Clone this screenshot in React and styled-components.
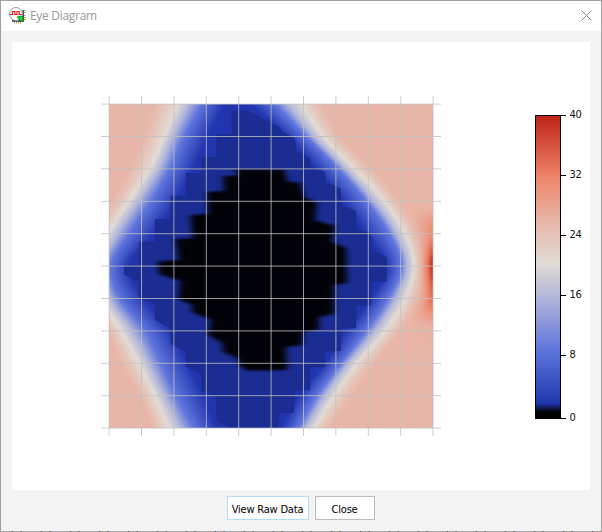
import React from 'react'
import styled, {createGlobalStyle} from 'styled-components'

const GlobalStyle = createGlobalStyle`
  html, body {
    margin: 0;
    padding: 0;
    overflow: hidden;
  }
  * {
    box-sizing: border-box;
  }
`

const LEFT = 97
const TOP = 62
const SIZE = 324
const STEP = SIZE / 10

// one entry per grid line: x of pink, cream, periwinkle, royal on the left,
// then royal, periwinkle, cream, pink on the right, then the right edge value
const ROWS = [
  [44, 69, 93, 116, 141, 166, 193, 213, 26],
  [34, 55, 75, 99, 178, 197, 214, 231, 26],
  [20, 41, 61, 84, 207, 229, 245, 264, 26],
  [3, 20, 42, 67, 234, 257, 275, 291, 26],
  [-15, -1, 20, 45, 257, 280, 296, 308, 31.5],
  [-28, -13, 2, 20, 277, 292, 305, 312, 40],
  [-22, -7, 11, 35, 262, 279, 296, 309, 34],
  [-2, 12, 36, 61, 237, 257, 276, 292, 26.5],
  [12, 30, 52, 79, 216, 232, 248, 266, 26],
  [29, 46, 67, 95, 190, 208, 225, 243, 26],
  [44, 60, 85, 108, 172, 189, 205, 220, 26]
]

const SCALE = [
  [0, [0, 0, 0]],
  [0.9, [2, 3, 8]],
  [2, [33, 54, 174]],
  [9, [95, 117, 221]],
  [16, [178, 182, 218]],
  [20.6, [226, 219, 213]],
  [26, [232, 182, 168]],
  [32, [238, 131, 104]],
  [40, [189, 34, 22]]
]

const colorAt = value => {
  let i = 1
  while (i < SCALE.length - 1 && value > SCALE[i][0]) i++
  const [v0, c0] = SCALE[i - 1]
  const [v1, c1] = SCALE[i]
  const t = Math.max(0, Math.min(1, (value - v0) / (v1 - v0)))
  return `rgb(${c0.map((c, k) => Math.round(c + (c1[k] - c) * t)).join(',')})`
}

const rowAt = y => {
  const i = Math.min(9, Math.floor(y / STEP))
  const t = y / STEP - i
  return ROWS[i].map((v, k) => {
    const b = ROWS[i + 1][k]
    if (k === 8) return v + (b - v) * t * t * (3 - 2 * t)
    // cubic between grid lines so the edge bends gently
    const a = i > 0 ? ROWS[i - 1][k] : 2 * v - b
    const c = i < 9 ? ROWS[i + 2][k] : 2 * b - v
    return 0.5 * (2 * v + (b - a) * t + (2 * a - 5 * v + 4 * b - c) * t * t + (3 * v - a - 3 * b + c) * t * t * t)
  })
}

const stopsAt = y => {
  const [p, c, b, r, r2, b2, c2, p2, edge] = rowAt(y)
  return [
    [p, 26], [(p + c) / 2, 23.6], [c, 20.6], [b + (c - b) * 0.55, 16], [b, 9], [r, 2],
    [r2, 2], [b2, 9], [b2 + (c2 - b2) * 0.45, 16], [c2, 20.6],
    [(p2 + c2) / 2, 23.6], [p2, 26],
    [p2 + (SIZE - p2) * 0.55, 26 + (edge - 26) * 0.5], [SIZE, edge]
  ]
}

const NAVY = `231.7,110.7 231.7,134.3 216.7,134.3 215.7,157 201.7,157 201,173 186,173 185,195.7
  170.7,195.7 170,219 155,219 154.3,241.7 139.3,241.7 138.7,265.7 124,265.7 124,274.3
  138.7,281.7 138.7,298.3 154.3,304.3 155,320 170,327.7 170.7,344.3 185,350.7 185.7,366.7
  201,374 201.7,391 215.7,396.7 216.7,421 230,428 278.7,428 279.3,413.3 294,412.7
  295.3,390.7 310,390 310.3,367.7 325,367 325.3,351.7 340.7,351 341.3,328.3 356,328.3
  356.7,305.7 371.3,305 372,282.3 386.7,281.7 386.7,257.3 372,250 371.3,234.3 356.7,228.3
  356,211 341.3,205 340.7,188.3 326,182.3 325,171.7 310.7,166.7 310,158.3 296.7,151.7
  295,138.3 280.7,131 280,127.3 271.7,123.3 248.3,110.7`

const BLACK = `234,169.5 239,175.5 223,176 224,191 207,192 208,214 190,215 193,238 175,239
  179,260 158,261.5 159,274 180,281 178,299 192,305 192,312 211,320 208,335 222,343
  223,352 238,358 239,365 246,370.5 271,370.5 287,370 286,347 302,345 303,331.5
  319,330 319,317 334,314 334,285 347,283 346,248 332,242 335,226 315,220 317,203
  304,197 300,182.5 288,182 284,169.5`

const TICKS = [[40, 115], [32, 175], [24, 235], [16, 295], [8, 355], [0, 418]]

function Heatmap() {
  const strips = Array.from({length: SIZE / 2}, (_, i) => i * 2)
  const lines = Array.from({length: 11}, (_, i) => i * STEP)
  return (
    <g transform={`translate(${LEFT} ${TOP})`}>
      <defs>
        {strips.map(y => (
          <linearGradient key={y} id={`row${y}`} gradientUnits='userSpaceOnUse' x1={-50} x2={SIZE} y1='0' y2='0'>
            {stopsAt(y + 1).map(([x, v], k) => (
              <stop key={k} offset={(x + 50) / (SIZE + 50)} stopColor={colorAt(v)}/>
            ))}
          </linearGradient>
        ))}
        <clipPath id='plot'>
          <rect width={SIZE} height={SIZE}/>
        </clipPath>
        <filter id='soften' x='-10%' y='-10%' width='120%' height='120%' colorInterpolationFilters='sRGB'>
          <feGaussianBlur stdDeviation='3.4 1.1'/>
        </filter>
      </defs>
      {strips.map(y => (
        <rect key={y} y={y} width={SIZE} height='2' fill={`url(#row${y})`} shapeRendering='crispEdges'/>
      ))}
      <g clipPath='url(#plot)'>
        <g transform='translate(-109 -104)'>
          <polygon points={NAVY} fill='#1b2d92'/>
          <polygon points={BLACK} fill='#020308' filter='url(#soften)'/>
        </g>
      </g>
      <g stroke='#c0c0c0' strokeOpacity='0.8'>
        {lines.map(p => (
          <React.Fragment key={p}>
            <path d={`M${p + 0.1} -8V${SIZE + 8}`}/>
            <path d={`M-8 ${p + 0.1}H${SIZE + 8}`}/>
          </React.Fragment>
        ))}
      </g>
    </g>
  )
}

function ColorBar() {
  return (
    <g>
      <defs>
        <linearGradient id='scale' x1='0' x2='0' y1='1' y2='0'>
          {SCALE.map(([v]) => <stop key={v} offset={v / 40} stopColor={colorAt(v)}/>)}
        </linearGradient>
      </defs>
      <rect x='523.5' y='73.5' width='25' height='303' fill='url(#scale)' stroke='#000'/>
      {TICKS.map(([label, y]) => (
        <React.Fragment key={label}>
          <path d={`M549 ${y - 41.5}h5`} stroke='#000'/>
          <TickLabel x='557.5' y={y - 39}>{label}</TickLabel>
        </React.Fragment>
      ))}
    </g>
  )
}

function AppIcon() {
  return (
    <Icon width='17' height='17' viewBox='0 0 17 17'>
      <path d='M14 3.5h2.5M14 5.5h2.5M14 8.5h2.5M14 10.5h2.5M14 12.5h2.5M5.5 14v2.5M7.5 14v2.5M9.5 14v2.5M11.5 14v2.5' stroke='#b98a3c' strokeWidth='0.9'/>
      <path d='M3 13.8h11V3.5' fill='none' stroke='#2b4762' strokeWidth='1.8'/>
      <circle cx='7' cy='7' r='6.5' fill='#fff' stroke='#999'/>
      <path d='M.8 7.5H3.5v-3h2.3v3h2.2v-3h2.2v3h3' fill='none' stroke='#f01818' strokeWidth='1.2'/>
      <path d='M8.7 9.3h5.3v5.2h-1.8l-1-1.2-2.5-2.3z' fill='#18d828' stroke='#0b6b14' strokeWidth='0.7'/>
    </Icon>
  )
}

export default function App() {
  return (
    <Dialog>
      <GlobalStyle/>
      <TitleBar>
        <AppIcon/>
        <Title>Eye Diagram</Title>
        <CloseIcon width='11' height='11' viewBox='0 0 11 11'>
          <path d='M.5 .5l10 10M10.5 .5l-10 10' stroke='#888' strokeWidth='1'/>
        </CloseIcon>
      </TitleBar>
      <Panel>
        <svg width='578' height='448' viewBox='0 0 578 448'>
          <Heatmap/>
          <ColorBar/>
        </svg>
      </Panel>
      <ButtonRow>
        <Button $width={82} $active>View Raw Data</Button>
        <Button $width={60}>Close</Button>
      </ButtonRow>
      <BottomEdge/>
    </Dialog>
  )
}

const Dialog = styled.div`
  display: flex;
  flex-direction: column;
  width: 602px;
  height: 532px;
  border: 1px solid #a0a0a0;
  border-bottom: 0;
  background: #f3f3f3;
`

const TitleBar = styled.header`
  display: flex;
  align-items: center;
  height: 30px;
  flex: none;
  padding: 0 9px 0 8px;
  background: #fff;
`

const Icon = styled.svg`
  margin-top: -1px;
`

const Title = styled.span`
  flex: 1;
  margin-left: 4px;
  color: #999;
  font: 12px/16px 'Open Sans', sans-serif;
  letter-spacing: -0.3px;
`

const CloseIcon = styled.svg`
  margin-top: -2px;
`

const Panel = styled.main`
  height: 448px;
  flex: none;
  margin: 11px 11px 0;
  background: #fff;
  svg {
    display: block;
  }
`

const TickLabel = styled.text`
  font: 11px 'DejaVu Sans Condensed', 'DejaVu Sans', sans-serif;
  letter-spacing: -0.3px;
  fill: #111;
`

const ButtonRow = styled.footer`
  display: flex;
  justify-content: center;
  gap: 6px;
  flex: 1;
  padding-top: 6px;
`

const Button = styled.button`
  width: ${p => p.$width}px;
  height: 24px;
  padding: 3px 1px 0 0;
  border: 1px solid ${p => p.$active ? '#b5dcf5' : '#bcbcbc'};
  background: #fdfdfd;
  color: #000;
  font: 11px/14px 'DejaVu Sans Condensed', 'DejaVu Sans', sans-serif;
  letter-spacing: -0.2px;
  white-space: nowrap;
`

const BottomEdge = styled.div`
  height: 1px;
  flex: none;
  background: repeating-linear-gradient(90deg, #a5a5a5 0 11px, #555 11px 12px, #a5a5a5 12px 19px, #b0763d 19px 20px, #537ba0 20px 21px, #a5a5a5 21px 29px);
`
